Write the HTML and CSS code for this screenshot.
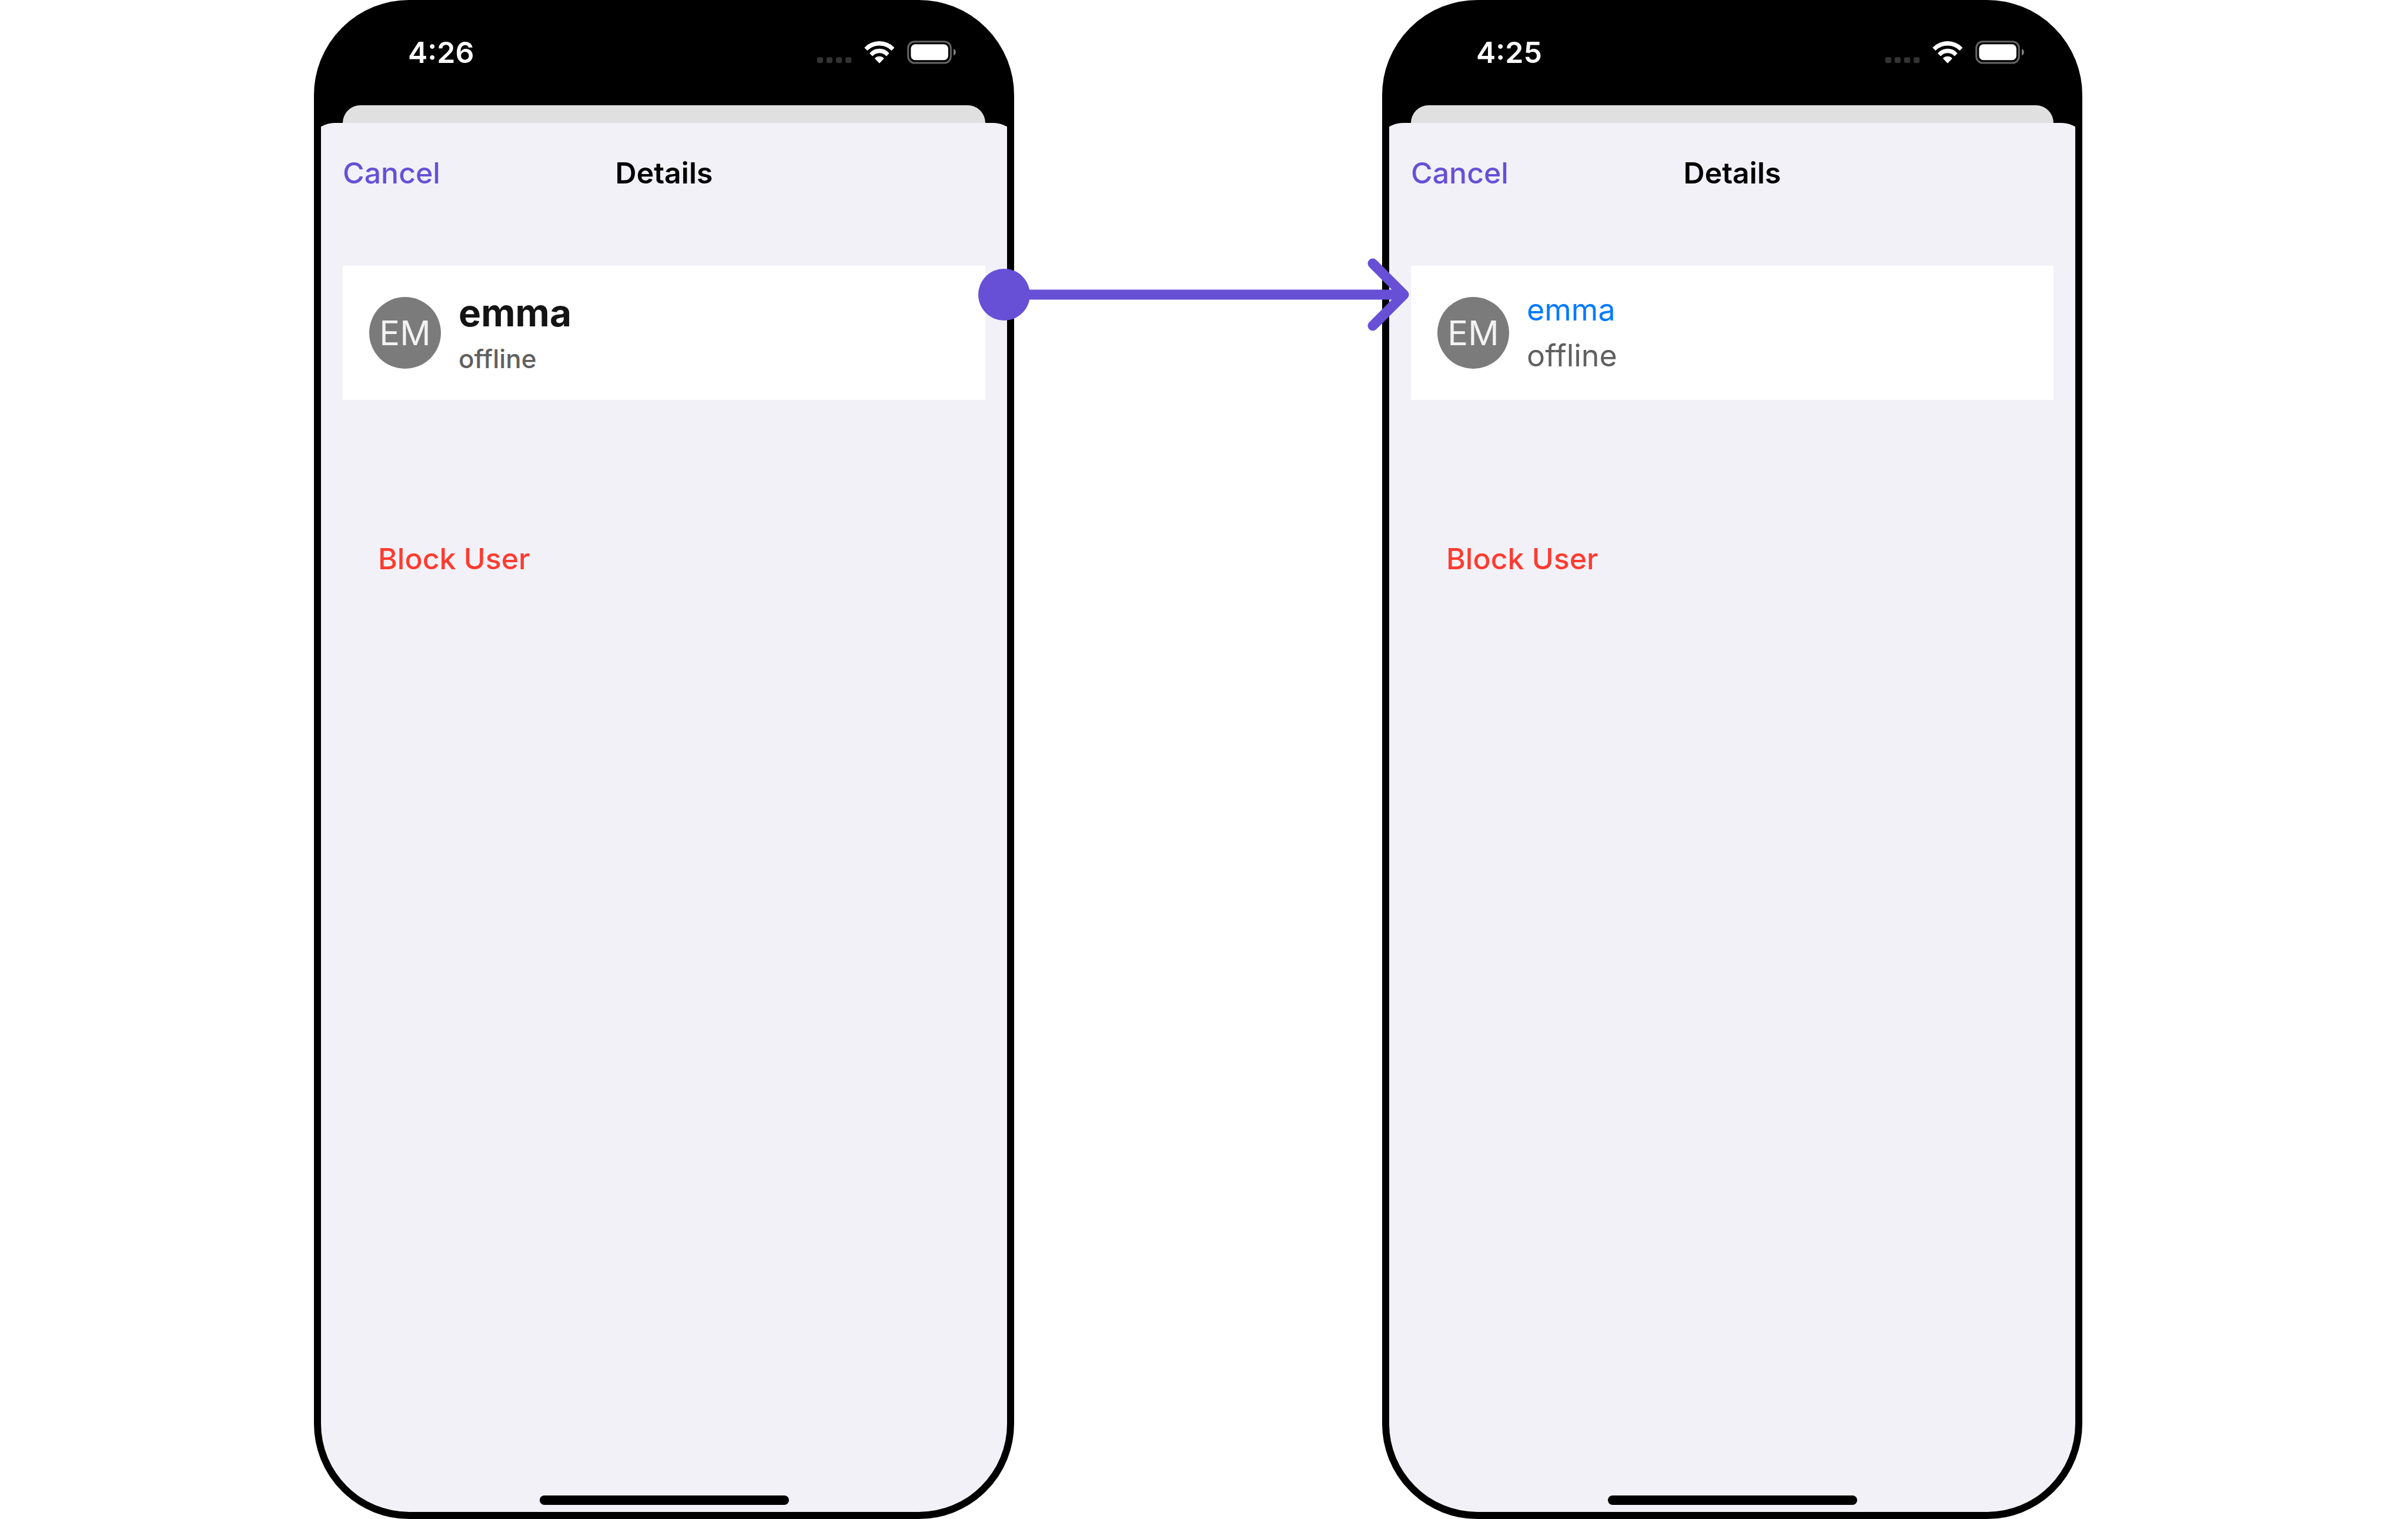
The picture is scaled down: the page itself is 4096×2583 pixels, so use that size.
FILE: index.html
```html
<!DOCTYPE html>
<html lang="en">
<head>
<meta charset="utf-8">
<title>Details</title>
<link rel="stylesheet" href="styles.css">
</head>
<body>
<svg class="symbols" aria-hidden="true">
  <symbol id="status-icons" viewBox="112 68 864 146">
    <g fill="#333">
      <rect x="113" y="171" width="37" height="37" rx="12"/>
      <rect x="171" y="171" width="37" height="37" rx="12"/>
      <rect x="230" y="171" width="37" height="37" rx="12"/>
      <rect x="289" y="171" width="37" height="37" rx="12"/>
    </g>
    <g fill="#fff" stroke="#fff" stroke-width="4" stroke-linejoin="round">
      <path d="M409 112A127 127 0 0 1 590 112L575 128A106 106 0 0 0 425 128Z"/>
      <path d="M441 147A78 78 0 0 1 558 147L543 162A60 60 0 0 0 457 162Z"/>
      <path d="M473 179A37 37 0 0 1 526 179L500 206Z"/>
    </g>
    <rect x="678" y="74" width="265" height="133" rx="40" fill="none" stroke="#666" stroke-width="11"/>
    <rect x="695" y="91" width="232" height="98" rx="27" fill="#fff"/>
    <path d="M960 119C979 127 979 153 960 161Z" fill="#808080"/>
  </symbol>
</svg>
<main class="stage">
  <section class="phone">
    <header class="status">
      <time>4:26</time>
      <svg class="status-icons" aria-hidden="true"><use href="#status-icons"/></svg>
    </header>
    <div class="behind"></div>
    <div class="sheet">
      <nav class="navbar">
        <button class="cancel" type="button">Cancel</button>
        <h1 class="title">Details</h1>
      </nav>
      <article class="card">
        <div class="avatar">EM</div>
        <div class="who">
          <h2 class="name">emma</h2>
          <p class="presence">offline</p>
        </div>
      </article>
      <button class="block" type="button">Block User</button>
      <div class="home"></div>
    </div>
  </section>
  <div class="connector">
    <svg class="arrow" viewBox="0 0 733 124" aria-hidden="true">
      <circle cx="44" cy="62" r="44" fill="#6750d6"/>
      <path d="M44 62H724M671 9L724 62L671 115" fill="none" stroke="#6750d6" stroke-width="17" stroke-linecap="round" stroke-linejoin="round"/>
    </svg>
  </div>
  <section class="phone">
    <header class="status">
      <time>4:25</time>
      <svg class="status-icons" aria-hidden="true"><use href="#status-icons"/></svg>
    </header>
    <div class="behind"></div>
    <div class="sheet">
      <nav class="navbar">
        <button class="cancel" type="button">Cancel</button>
        <h1 class="title">Details</h1>
      </nav>
      <article class="card">
        <div class="avatar">EM</div>
        <div class="who styled">
          <h2 class="name">emma</h2>
          <p class="presence">offline</p>
        </div>
      </article>
      <button class="block" type="button">Block User</button>
      <div class="home"></div>
    </div>
  </section>
</main>
</body>
</html>
```
FILE: styles.css
```css
* {
  box-sizing: border-box;
}

body {
  margin: 0;
  background: #fff;
  font-family: Inter, "Liberation Sans", sans-serif;
  font-size: 50px;
  line-height: 60px;
}

h1, h2, p {
  margin: 0;
  font-size: inherit;
}

button {
  padding: 0;
  border: 0;
  background: none;
  font: inherit;
  font-weight: 450;
  cursor: pointer;
}

.symbols {
  display: none;
}

.stage {
  display: grid;
  grid-template-columns: 1191fr 626fr 1191fr;
  min-height: 100vh;
  padding: 0 554px 0 534px;
}

.phone {
  display: flex;
  flex-direction: column;
  overflow: hidden;
  border: 12px solid #000;
  border-radius: 162px;
  background: #000;
}

.status {
  display: flex;
  align-items: center;
  justify-content: space-between;
  height: 167px;
  padding: 0 86px 13px 148px;
  color: #fff;
  font-weight: 600;
}

.status-icons {
  width: 238px;
  height: 40px;
}

.behind {
  height: 30px;
  margin: 0 37px;
  border-radius: 30px 30px 0 0;
  background: #e0e0e0;
}

/* The sheet is wider than the screen, so only part of its corners shows. */
.sheet {
  display: flex;
  flex: 1;
  flex-direction: column;
  align-items: flex-start;
  margin: 0 -24px;
  padding: 0 61px 12px;
  border-radius: 48px 48px 0 0;
  background: #f2f1f7;
}

.navbar {
  display: grid;
  grid-template-columns: 1fr auto 1fr;
  align-items: center;
  width: 100%;
  height: 170px;
}

.cancel {
  justify-self: start;
  color: #6750d6;
}

.title {
  font-weight: 600;
}

.card {
  display: flex;
  align-items: center;
  gap: 30px;
  width: 100%;
  margin-top: 73px;
  padding: 53px 45px;
  background: #fff;
}

.avatar {
  display: grid;
  place-items: center;
  width: 122px;
  height: 122px;
  border-radius: 50%;
  background: #7b7b7b;
  color: #f2f2f2;
  font-size: 58px;
}

.who {
  display: grid;
  gap: 4px;
  margin: -20px 0;
}

.name {
  color: #141414;
  font-size: 64px;
  font-weight: 700;
  line-height: 84px;
}

.presence {
  color: #606060;
  font-size: 44px;
  font-weight: 450;
  line-height: 64px;
}

.styled {
  gap: 0;
}

.styled .name,
.styled .presence {
  font-size: 52px;
  font-weight: 400;
  line-height: 78px;
}

.styled .name {
  color: #007aff;
}

.block {
  margin: 240px 60px 0;
  color: #ff3b30;
}

.home {
  align-self: center;
  width: 424px;
  height: 16px;
  margin-top: auto;
  border-radius: 8px;
  background: #000;
}

.connector {
  position: relative;
}

.arrow {
  position: absolute;
  top: 439px;
  left: -61px;
  width: calc(100% + 107px);
}
```
